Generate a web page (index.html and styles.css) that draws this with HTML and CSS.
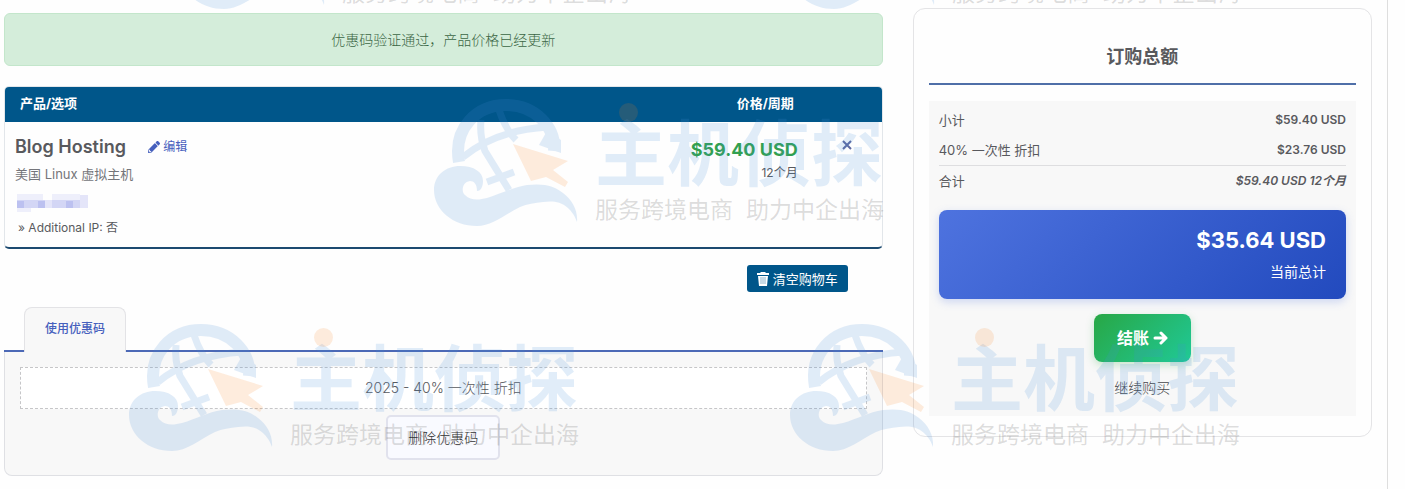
FILE: index.html
```
<!DOCTYPE html>
<html lang="zh-CN">
<head>
 <meta charset="utf-8">
 <meta name="viewport" content="width=device-width, initial-scale=1">
 <title>购物车</title>
 <link rel="stylesheet" href="styles.css">
</head>
<body>
 <svg class="sprite" aria-hidden="true">
  <symbol id="wm-mark" viewBox="0 0 146 130">
   <g class="wm-blue">
    <path class="wm-ring" d="M26 64C20 30 44 7 73 7c29 0 50 22 48 46"/>
    <path class="wm-line" d="M30 59C52 41 80 31 115 29M48 22c-1 10 0 20 4 31l24 39M66 12c4 12 9 22 17 30M54 84l27-10"/>
    <path d="M106 47l22 8V42l-14-9z"/>
    <path d="M1 92C1 77 13 68 27 68c14 0 23 6 23 15 0 5-2 10-6 10 0-7-3-10-7-10-8 1-9 11-5 14 6 6 14 5 22 3 14-4 26-11 40-13 17-2 28 1 36 8 9 7 15 17 14 29-3-8-6-11-9-14-8-7-16-7-25-6-8 1-16 2-23 5-16 8-28 19-43 19C20 128 1 112 1 92z"/>
   </g>
   <path class="wm-orange" d="M80 46l55 17-15 9 15 12-3 5-19-10-15 4z"/>
  </symbol>
 </svg>

 <div class="page">
  <main class="col-main">
   <div class="alert">优惠码验证通过，产品价格已经更新</div>

   <table class="cart">
    <thead>
     <tr><th>产品/选项</th><th class="price-head">价格/周期</th><th class="remove-col"></th></tr>
    </thead>
    <tbody>
     <tr>
      <td class="item">
       <div class="item-head">
        <span class="item-title">Blog Hosting</span>
        <a class="edit" href="#edit"><svg width="12" height="12" viewBox="0 0 512 512" fill="currentColor"><path d="M498 142l-46 46c-5 5-12 5-17 0L324 77c-5-5-5-12 0-17l46-46c19-19 49-19 68 0l60 60c19 19 19 49 0 68zM284 100L22 362 0 484c-3 16 12 31 28 28l122-21 262-262c5-5 5-12 0-17L301 100c-5-5-13-5-17 0zM88 424h48v36l-64 12-32-32 12-64h36z"/></svg> 编辑</a>
       </div>
       <div class="item-group">美国 Linux 虚拟主机</div>
       <div class="item-domain">
        <svg width="72" height="18" viewBox="0 0 72 18" role="img" aria-label="域名">
         <path fill="#eeeffb" d="M0 0h26v7H0zM35 0h28v7H35zM0 14h14v4H0z"/>
         <path fill="#d3d6f5" d="M0 6h63v8H0z"/>
         <path fill="#e4e5f9" d="M28 6h7v8h-7zM63 1h8v13h-8z"/>
         <path fill="#bcc1f0" d="M0 7h7v7H0zM21 7h7v7h-7zM49 7h7v7h-7z"/>
        </svg>
       </div>
       <div class="item-option">» Additional IP: 否</div>
      </td>
      <td class="price-cell">
       <div class="price">$59.40 USD</div>
       <div class="cycle">12个月</div>
      </td>
      <td class="remove-cell">
       <button class="remove" type="button" aria-label="移除"><svg width="10" height="10" viewBox="0 0 10 10" fill="none" stroke="currentColor" stroke-width="2"><path d="M1 1l8 8M9 1L1 9"/></svg></button>
      </td>
     </tr>
    </tbody>
   </table>

   <div class="cart-actions">
    <button class="empty" type="button"><svg width="12" height="14" viewBox="0 0 12 14"><path fill="currentColor" d="M4 0h4l1 1h3v2H0V1h3zM1 4h10l-1 10H2z"/><path stroke="#8fb4cc" d="M4 5v7M6 5v7M8 5v7"/></svg> 清空购物车</button>
   </div>

   <div class="tabs">
    <a class="tab" href="#promo">使用优惠码</a>
   </div>
   <div class="promo" id="promo">
    <div class="promo-code">2025 - 40% 一次性 折扣</div>
    <button class="promo-remove" type="button">删除优惠码</button>
   </div>
  </main>

  <aside class="col-side">
   <div class="summary">
    <h2>订购总额</h2>
    <div class="summary-body">
     <div class="line"><span>小计</span><b>$59.40 USD</b></div>
     <div class="line"><span>40% 一次性 折扣</span><b>$23.76 USD</b></div>
     <div class="line line-total"><span>合计</span><b><i>$59.40 USD 12个月</i></b></div>
     <div class="due">
      <div class="due-amount">$35.64 USD</div>
      <div class="due-label">当前总计</div>
     </div>
     <div class="checkout-row">
      <button class="checkout" type="button">结账 <svg width="15" height="14" viewBox="0 0 15 14" fill="none" stroke="currentColor" stroke-width="3" stroke-linecap="round" stroke-linejoin="round"><path d="M2 7h11M8 2l5 5-5 5"/></svg></button>
      <a class="continue" href="#products">继续购买</a>
     </div>
    </div>
   </div>
  </aside>
 </div>

 <!-- watermark layer -->
 <div class="watermarks" aria-hidden="true">
  <div class="wm wm-1">
   <svg class="wm-logo"><use href="#wm-mark"/></svg>
   <div class="wm-text"><i class="wm-dot"></i><span class="wm-name">主机侦探</span><span class="wm-tag">服务跨境电商&nbsp;&nbsp;助力中企出海</span></div>
  </div>
  <div class="wm wm-2">
   <svg class="wm-logo"><use href="#wm-mark"/></svg>
   <div class="wm-text"><i class="wm-dot"></i><span class="wm-name">主机侦探</span><span class="wm-tag">服务跨境电商&nbsp;&nbsp;助力中企出海</span></div>
  </div>
  <div class="wm wm-3">
   <svg class="wm-logo"><use href="#wm-mark"/></svg>
   <div class="wm-text"><i class="wm-dot"></i><span class="wm-name">主机侦探</span><span class="wm-tag">服务跨境电商&nbsp;&nbsp;助力中企出海</span></div>
  </div>
  <div class="wm wm-4">
   <svg class="wm-logo"><use href="#wm-mark"/></svg>
   <div class="wm-text"><i class="wm-dot"></i><span class="wm-name">主机侦探</span><span class="wm-tag">服务跨境电商&nbsp;&nbsp;助力中企出海</span></div>
  </div>
  <div class="wm wm-5">
   <svg class="wm-logo"><use href="#wm-mark"/></svg>
   <div class="wm-text"><i class="wm-dot"></i><span class="wm-name">主机侦探</span><span class="wm-tag">服务跨境电商&nbsp;&nbsp;助力中企出海</span></div>
  </div>
 </div>
</body>
</html>
```
FILE: styles.css
```
* {
  box-sizing: border-box;
}
body {
  margin: 0;
  background: #fefefe;
  color: #58595d;
  font: 13px/20px Inter, "Noto Sans CJK SC", sans-serif;
}
button {
  font: inherit;
  cursor: pointer;
}
a {
  color: #4660bd;
  text-decoration: none;
}
.sprite {
  position: absolute;
  width: 0;
  height: 0;
}

.page {
  display: grid;
  grid-template-columns: 65% 35%;
  align-items: start;
  min-height: 100vh;
  margin: 0 17px 0 -11px;
  border-right: 1px solid #dedede;
}
.col-main {
  padding: 13px 15px;
}
.col-side {
  padding: 8px 15px;
}

.alert {
  padding: 16px;
  border: 1px solid #c3e6cb;
  border-radius: 6px;
  background: #d4edda;
  color: #3b6644;
  font-size: 14px;
  font-weight: 300;
  line-height: 19px;
  text-align: center;
}

/* cart */
.cart {
  width: 100%;
  margin-top: 20px;
  border: 1px solid #e2e6ea;
  border-bottom: 2px solid #1c4a70;
  border-radius: 5px;
  border-spacing: 0;
  overflow: hidden;
}
.cart th {
  height: 35px;
  padding: 0 15px 4px;
  background: #00568a;
  color: #fff;
  font-size: 13px;
  font-weight: 700;
  line-height: 18px;
  text-align: left;
}
.cart .price-head {
  padding-right: 18px;
  text-align: right;
}
.cart td {
  padding: 13px 10px 9px;
  vertical-align: top;
}
.remove-col {
  width: 70px;
}
.item-head {
  display: flex;
  align-items: center;
  gap: 22px;
  height: 24px;
}
.item-title {
  font-size: 18px;
  font-weight: 600;
}
.edit {
  font-size: 12px;
}
.edit svg {
  vertical-align: -2px;
}
.item-group {
  margin-top: 5px;
  color: #74757a;
}
.item-domain {
  height: 18px;
  margin: 10px 0 6px 2px;
}
.item-domain svg {
  display: block;
}
.item-option {
  margin-left: 3px;
  font-size: 12px;
}
.cart .price-cell {
  padding-top: 18px;
  padding-right: 14px;
  text-align: right;
  white-space: nowrap;
}
.price {
  color: #32a050;
  font-size: 18px;
  font-weight: 700;
}
.cycle {
  margin-top: 3px;
  font-size: 12px;
}
.remove {
  margin: 0;
  padding: 0 20px;
  border: 0;
  background: none;
  color: #5d68a0;
  line-height: 20px;
}
.cart-actions {
  padding: 16px 35px 0 0;
  text-align: right;
}
.empty {
  height: 27px;
  padding: 0 10px;
  border: 0;
  border-radius: 3px;
  background: #00568a;
  color: #fff;
}
.empty svg {
  vertical-align: -2px;
}

/* promo code */
.tabs {
  display: flex;
  margin-top: 15px;
  padding-left: 20px;
  border-bottom: 2px solid #4c69b6;
}
.tab {
  margin-bottom: -2px;
  padding: 11px 20px 13px;
  border: 1px solid #e3e3e6;
  border-bottom: 0;
  border-radius: 8px 8px 0 0;
  background: #f8f8f8;
  font-size: 12px;
  font-weight: 500;
}
.promo {
  padding: 15px 15px;
  border: 1px solid #dfe0e4;
  border-top: 0;
  border-radius: 0 0 8px 8px;
  background: #f8f8f8;
  text-align: center;
}
.promo-code {
  padding: 10px;
  border: 1px dashed #c6c6c8;
  background: #fff;
  font-size: 14px;
  font-weight: 300;
}
.promo-remove {
  height: 45px;
  margin-top: 6px;
  padding: 0 20px;
  border: 2px solid #e1e2ed;
  border-radius: 5px;
  background: #f9faff;
  color: #333;
  font-size: 14px;
  font-weight: 300;
}

/* order summary */
.summary {
  padding: 30px 15px 20px;
  border: 1px solid #e4e4e6;
  border-radius: 12px;
}
.summary h2 {
  margin: 0 0 16px;
  padding: 5px 0 13px;
  border-bottom: 2px solid #4f6fa8;
  font-size: 18px;
  font-weight: 700;
  line-height: 26px;
  text-align: center;
}
.summary-body {
  padding: 4px 10px 18px;
  background: #f8f8f8;
}
.line {
  display: flex;
  justify-content: space-between;
  padding: 5px 0;
}
.line b {
  font-size: 12px;
  font-weight: 600;
}
.line-total {
  border-top: 1px solid #dedee0;
}
.due {
  margin-top: 14px;
  padding: 18px 20px 17px;
  border-radius: 8px;
  background: linear-gradient(135deg, #4e73df, #224abe);
  box-shadow: 0 3px 8px rgba(78, 115, 223, .25);
  color: #fff;
  text-align: right;
}
.due-amount {
  font-size: 22px;
  font-weight: 700;
  line-height: 24px;
}
.due-label {
  margin-top: 10px;
  font-size: 14px;
}
.checkout-row {
  display: flex;
  flex-direction: column;
  align-items: center;
  gap: 16px;
  margin-top: 15px;
}
.checkout {
  height: 48px;
  padding: 0 23px;
  border: 0;
  border-radius: 8px;
  background: linear-gradient(135deg, #28a745, #20c997);
  box-shadow: 0 3px 8px rgba(40, 167, 69, .25);
  color: #fff;
  font-size: 16px;
  font-weight: 700;
}
.checkout svg {
  vertical-align: -1px;
}
.continue {
  color: #46474b;
  font-size: 14px;
  font-weight: 300;
}

/* watermark */
.watermarks {
  position: absolute;
  top: 0;
  left: 0;
  width: 100%;
  height: 100%;
  overflow: hidden;
  pointer-events: none;
}
.wm {
  position: absolute;
  display: flex;
  align-items: flex-start;
  gap: 16px;
  white-space: nowrap;
}
.wm-1 { left: 180px; top: -119px; }
.wm-2 { left: 790px; top: -119px; }
.wm-3 { left: 433px; top: 98px; }
.wm-4 { left: 128px; top: 323px; }
.wm-5 { left: 789px; top: 323px; }
.wm-logo {
  width: 146px;
  height: 130px;
}
/* group opacity keeps the crossing strokes one flat tone */
.wm-blue {
  fill: #468cd7;
  opacity: .16;
}
.wm-ring,
.wm-line {
  fill: none;
  stroke: #468cd7;
  stroke-width: 12;
}
.wm-line {
  stroke-width: 7;
}
.wm-orange {
  fill: rgba(245, 130, 30, .15);
}
.wm-text {
  position: relative;
  padding-top: 18px;
}
.wm-dot {
  position: absolute;
  top: 5px;
  left: 24px;
  width: 19px;
  height: 19px;
  border-radius: 50%;
  background: rgba(245, 130, 30, .15);
}
.wm-name,
.wm-tag {
  display: block;
}
.wm-name {
  color: rgba(70, 140, 215, .16);
  font-size: 72px;
  font-weight: 700;
  line-height: 76px;
}
.wm-tag {
  margin-top: 3px;
  color: rgba(80, 80, 80, .2);
  font-size: 23px;
  line-height: 30px;
}
```
